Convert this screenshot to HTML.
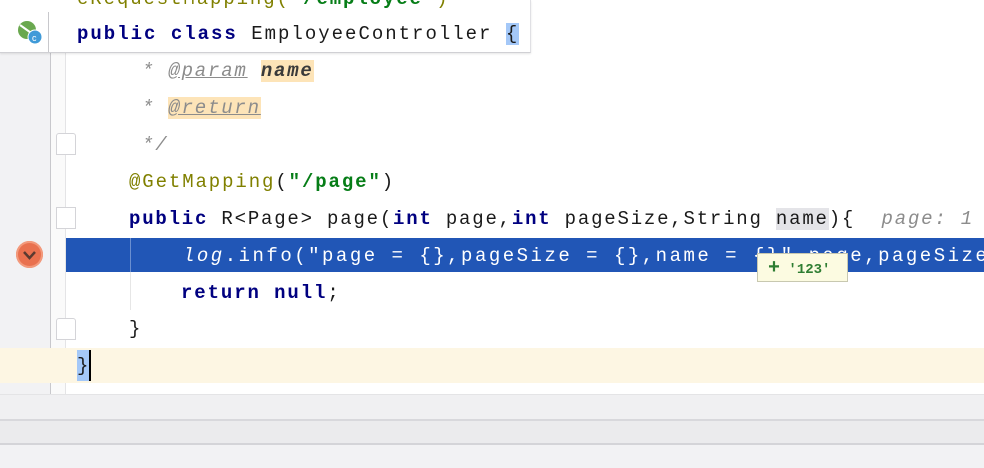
<!DOCTYPE html>
<html><head><style>
body{margin:0;width:984px;height:468px;overflow:hidden;background:#fff;position:relative;font-family:"Liberation Mono",monospace;}
.l{position:absolute;left:0;height:37px;line-height:37px;font-size:19px;letter-spacing:1.9px;white-space:pre;color:#1a1a1a;}
.kw{color:#000080;font-weight:bold}
.str{color:#067d17;font-weight:bold}
.ann{color:#808000}
.cm{color:#8c8c8c;font-style:italic}
</style></head><body>
<div style="position:absolute;left:0;top:0;width:50px;height:395px;background:#f2f2f4"></div>
<div style="position:absolute;left:50px;top:0;width:1px;height:395px;background:#c8c8cc"></div>
<div style="position:absolute;left:51px;top:0;width:15px;height:395px;background:#fafafa"></div>
<div style="position:absolute;left:65px;top:0;width:1px;height:395px;background:#e4e4e6"></div>
<div style="position:absolute;left:0;top:348px;width:984px;height:35px;background:#fdf6e3"></div>
<div style="position:absolute;left:66px;top:238px;width:918px;height:34px;background:#2156b6"></div>
<div style="position:absolute;left:130px;top:238px;width:1px;height:34px;background:#6b8fd0"></div>
<div style="position:absolute;left:130px;top:272px;width:1px;height:38px;background:#e6e6e6"></div>
<div style="position:absolute;left:16px;top:241px;width:27px;height:27px;border-radius:50%;background:#e9714f;box-shadow:inset 0 0 0 2px #f39a7c"></div>
<svg style="position:absolute;left:16px;top:241px" width="27" height="27"><path d="M8 11 L13.5 17 L19 11" stroke="#5a3a30" stroke-width="2.5" fill="none"/></svg>
<div style="position:absolute;left:56px;top:133px;width:18px;height:20px;border:1px solid #d4d4d8;background:#fff;border-radius:3px 3px 0 0"></div>
<div style="position:absolute;left:56px;top:207px;width:18px;height:20px;border:1px solid #d4d4d8;background:#fff"></div>
<div style="position:absolute;left:56px;top:318px;width:18px;height:20px;border:1px solid #d4d4d8;background:#fff;border-radius:3px 3px 0 0"></div>
<div class="l" style="top:53px;left:142px;letter-spacing:1.8px"><span class="cm">* <u>@param</u> <span style="background:#fde4b8;color:#3a3a3a;font-weight:bold">name</span></span></div>
<div class="l" style="top:90px;left:142px;letter-spacing:1.8px"><span class="cm">* <u style="background:#fde4b8">@return</u></span></div>
<div class="l" style="top:127px;left:142px"><span class="cm">*/</span></div>
<div class="l" style="top:164px;left:129px"><span class="ann">@GetMapping</span>(<span class="str">"/page"</span>)</div>
<div class="l" style="top:201px;left:129px;letter-spacing:1.8px"><span class="kw">public</span> R&lt;Page&gt; page(<span class="kw">int</span> page,<span class="kw">int</span> pageSize,String <span style="background:#e4e4e8">name</span>){  <span class="cm">page: 1</span></div>
<div class="l" style="top:238px;left:183px;color:#fff;letter-spacing:2.5px"><i>log</i>.info("page = {},pageSize = {},name = {}",page,pageSize</div>
<div class="l" style="top:275px;left:181px"><span class="kw">return</span> <span class="kw">null</span>;</div>
<div class="l" style="top:311px;left:129px">}</div>
<div style="position:absolute;left:77px;top:350px;width:12px;height:31px;background:#a4c8f8"></div>
<div style="position:absolute;left:89px;top:350px;width:2px;height:31px;background:#000"></div>
<div class="l" style="top:348px;left:77px">}</div>
<div style="position:absolute;left:757px;top:253px;width:91px;height:29px;background:#fcfbe1;border:1px solid #c8c8b0;font-family:'Liberation Mono',monospace;font-size:14px;line-height:29px;color:#2e7d32;font-weight:bold;padding-left:10px;box-sizing:border-box"><span style="font-size:20px">+</span> '123'</div>
<div style="position:absolute;left:0;top:0;width:530px;height:52px;background:#fff;border-bottom:1px solid #d0d0d4;border-right:1px solid #e0e0e4;box-shadow:0 1px 2px rgba(0,0,0,.1)"></div>
<div style="position:absolute;left:48px;top:12px;width:1px;height:40px;background:#c8c8cc"></div>
<div class="l" style="top:-19px;left:77px;color:#808000">eRequestMapping(<span class="str">"/employee"</span>)</div>
<div class="l" style="top:16px;left:77px;letter-spacing:2.0px"><span class="kw">public class</span> EmployeeController <span style="background:#a4c8f8">{</span></div>
<svg style="position:absolute;left:16px;top:20px" width="30" height="28"><circle cx="11" cy="10" r="9" fill="#6aa84f"/><path d="M4 5 L18 15" stroke="#fff" stroke-width="2"/><circle cx="19" cy="17" r="7" fill="#3f9ad8" stroke="#fff" stroke-width="1"/><text x="16" y="21" font-size="9" fill="#fff" font-family="Liberation Sans">c</text></svg>
<div style="position:absolute;left:0;top:394px;width:984px;height:25px;background:#f0f0f2;border-top:1px solid #e4e4e6"></div>
<div style="position:absolute;left:0;top:419px;width:984px;height:2px;background:#d8d8dc"></div>
<div style="position:absolute;left:0;top:421px;width:984px;height:22px;background:#ebebed"></div>
<div style="position:absolute;left:0;top:443px;width:984px;height:2px;background:#d4d4d8"></div>
<div style="position:absolute;left:0;top:445px;width:984px;height:23px;background:#f2f2f4"></div>
</body></html>
